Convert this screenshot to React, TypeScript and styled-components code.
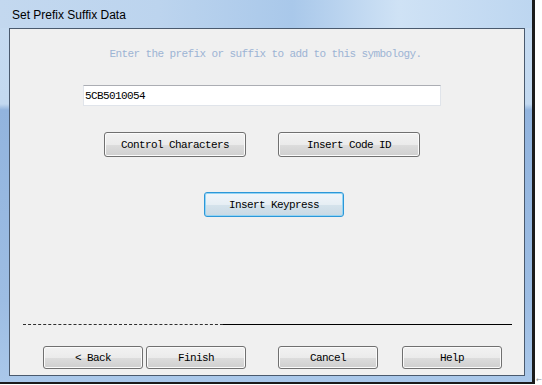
import styled, { createGlobalStyle } from "styled-components";

const GlobalStyle = createGlobalStyle`
  html, body {
    margin: 0;
    padding: 0;
    background: #ffffff;
  }
`;

const Page = styled.div`
  display: flex;
  align-items: flex-start;
`;

const Window = styled.div`
  width: 532px;
  height: 382px;
  border-right: 3px solid #1b1b1b;
  border-bottom: 2px solid #1b1b1b;
  display: flex;
  flex-direction: column;
  background: linear-gradient(
    to bottom,
    #c6dbf1 0px,
    #c3d9f0 104px,
    #92b4de 110px,
    #9dbde3 300px,
    #aac8ea 100%
  );
`;

const TitleBar = styled.div`
  height: 28px;
  display: flex;
  align-items: center;
  padding-left: 12px;
  background: linear-gradient(
    to right,
    #c3d8ef 0%,
    #bcd4ee 30%,
    #a9c8ea 55%,
    #cfe2f5 75%,
    #bdd6f0 100%
  );
`;

const Title = styled.span`
  font-family: "Liberation Sans", Arial, sans-serif;
  font-size: 12px;
  color: #000000;
  padding-top: 1px;
`;

const Panel = styled.div`
  flex: 1;
  margin: 0 7px 6px 9px;
  border: 1px solid #4a5a6e;
  background: #f0f0f0;
  display: flex;
  flex-direction: column;
  align-items: flex-start;
`;

const Hint = styled.div`
  align-self: stretch;
  margin-top: 19px;
  padding-right: 3px;
  text-align: center;
  font-family: "Liberation Mono", "Courier New", monospace;
  font-size: 11px;
  letter-spacing: -0.6px;
  line-height: 12px;
  color: #9db4d4;
`;

const TextBox = styled.input`
  box-sizing: border-box;
  margin: 25px 0 0 73px;
  width: 358px;
  height: 21px;
  padding: 0 0 0 1px;
  border: 1px solid #e0e4ea;
  border-top-color: #abadb3;
  background: #ffffff;
  font-family: "Liberation Mono", "Courier New", monospace;
  font-size: 11px;
  letter-spacing: -0.6px;
  color: #000000;
  outline: none;
`;

const Row = styled.div<{ $top: number; $left: number }>`
  display: flex;
  margin-top: ${p => p.$top}px;
  padding-left: ${p => p.$left}px;
`;

const Button = styled.button<{ $w: number; $h: number; $ml?: number; $focused?: boolean }>`
  box-sizing: border-box;
  width: ${p => p.$w}px;
  height: ${p => p.$h}px;
  margin-left: ${p => p.$ml ?? 0}px;
  padding: 0;
  border-radius: 3px;
  font-family: "Liberation Mono", "Courier New", monospace;
  font-size: 11px;
  letter-spacing: -0.6px;
  color: #000000;
  display: flex;
  align-items: center;
  justify-content: center;
  border: 1px solid ${p => (p.$focused ? "#2c97d8" : "#707070")};
  box-shadow: inset 0 0 0 1px ${p => (p.$focused ? "#93d4f4" : "#fbfbfb")};
  background: ${p =>
    p.$focused
      ? "linear-gradient(to bottom, #f1f6fa 0%, #e6eef4 50%, #d5e3ec 50%, #c9d9e4 100%)"
      : "linear-gradient(to bottom, #f2f2f2 0%, #ebebeb 50%, #dddddd 50%, #cfcfcf 100%)"};
`;

const Separator = styled.div`
  display: flex;
  margin: 107px 0 0 13px;
  width: 489px;
  height: 1px;
`;

const DottedPart = styled.div`
  width: 200px;
  border-top: 1px dashed #2e2e2e;
`;

const SolidPart = styled.div`
  flex: 1;
  border-top: 1px solid #000000;
`;

const Marker = styled.span`
  align-self: flex-end;
  margin: 0 0 0 1px;
  font-family: "DejaVu Sans", sans-serif;
  font-size: 7px;
  line-height: 7px;
  color: #888888;
`;

const App = () => {
  return (
    <Page>
      <GlobalStyle />
      <Window>
        <TitleBar>
          <Title>Set Prefix Suffix Data</Title>
        </TitleBar>
        <Panel>
          <Hint>Enter the prefix or suffix to add to this symbology.</Hint>
          <TextBox defaultValue="5CB5010054" />
          <Row $top={26} $left={94}>
            <Button $w={142} $h={25}>Control Characters</Button>
            <Button $w={142} $h={25} $ml={32}>Insert Code ID</Button>
          </Row>
          <Row $top={35} $left={194}>
            <Button $w={140} $h={25} $focused>Insert Keypress</Button>
          </Row>
          <Separator>
            <DottedPart />
            <SolidPart />
          </Separator>
          <Row $top={21} $left={33}>
            <Button $w={100} $h={23}>&lt; Back</Button>
            <Button $w={100} $h={23} $ml={3}>Finish</Button>
            <Button $w={100} $h={23} $ml={32}>Cancel</Button>
            <Button $w={100} $h={23} $ml={24}>Help</Button>
          </Row>
        </Panel>
      </Window>
      <Marker>←</Marker>
    </Page>
  );
};

export default App;
